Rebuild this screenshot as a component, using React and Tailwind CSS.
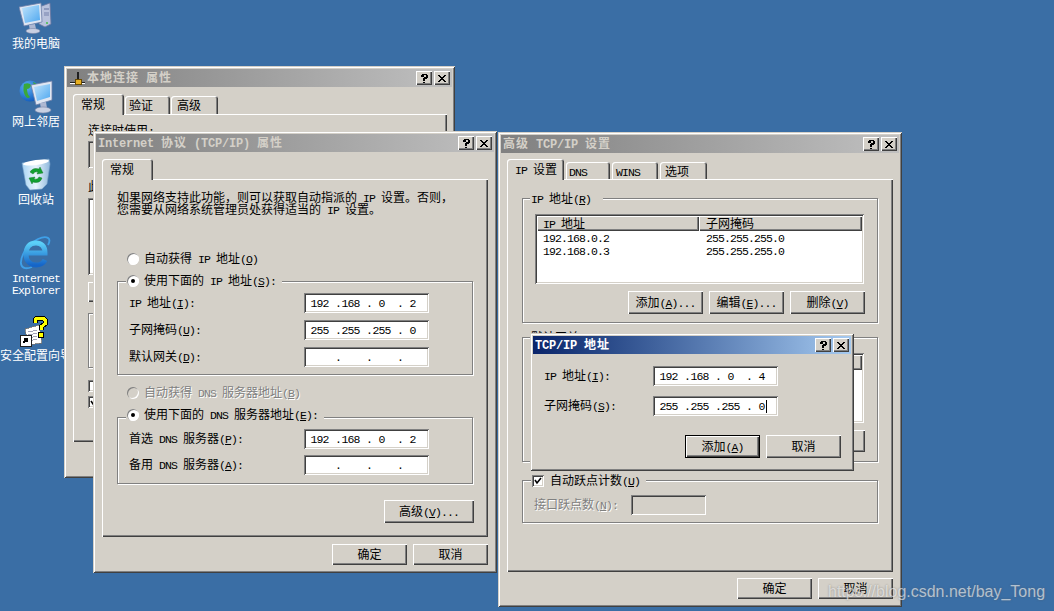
import React from "react";

const RAISED = "shadow-[inset_1px_1px_0_#ffffff,inset_-1px_-1px_0_#404040,inset_-2px_-2px_0_#808080]";
const SUNKEN = "shadow-[inset_1px_1px_0_#808080,inset_-1px_-1px_0_#ffffff,inset_2px_2px_0_#404040,inset_-2px_-2px_0_#d4d0c8]";

function T({ s, title, flat }) {
  const parts = s.split(/([\x00-\x7f]+)/);
  const cls = title
    ? "leading-[0] font-['Liberation_Mono',monospace] text-[12px] tracking-[-0.2px]"
    : "leading-[0] font-['Liberation_Mono',monospace] text-[11.5px] tracking-[-0.9px]";
  return (
    <span className={`whitespace-pre ${title ? "tracking-[1px]" : ""} ${flat ? "" : "inline-block -translate-y-px"}`}>
      {parts.map((p, i) => {
        if (!p) return null;
        if (!/^[\x00-\x7f]+$/.test(p)) return <span key={i}>{p}</span>;
        const m = p.split("&");
        return (
          <span key={i} className={cls}>
            {m.map((q, j) =>
              j === 0 ? (
                q
              ) : (
                <React.Fragment key={j}>
                  <span className="underline">{q[0]}</span>
                  {q.slice(1)}
                </React.Fragment>
              )
            )}
          </span>
        );
      })}
    </span>
  );
}

function TitleBtn({ x }) {
  return (
    <div className={`w-[16px] h-[14px] bg-[#d4d0c8] ${RAISED} flex items-center justify-center text-black`}>
      {x ? (
        <svg width="8" height="7" viewBox="0 0 8 7" shapeRendering="crispEdges">
          <path d="M0 0h2v1h-2zM1 1h2v1h-2zM2 2h1v1h-1zM3 2h2v3h-2zM5 2h1v1h-1zM5 1h2v1h-2zM6 0h2v1h-2zM2 4h1v1h-1zM5 4h1v1h-1zM1 5h2v1h-2zM5 5h2v1h-2zM0 6h2v1h-2zM6 6h2v1h-2z" fill="#000" />
        </svg>
      ) : (
        <svg width="8" height="9" viewBox="0 0 8 9" shapeRendering="crispEdges">
          <path d="M1 0h6v1h1v3h-1v1h-2v2h-2v-3h1v-1h2v-2h-2v2h-3v-2h1zM3 7.500h2v1.500h-2z" fill="#000" />
        </svg>
      )}
    </div>
  );
}

function PlugIcon() {
  return (
    <svg width="15" height="14" viewBox="0 0 15 14" className="absolute left-[3px] top-[3px]" shapeRendering="crispEdges">
      <rect x="7" y="0" width="2" height="8" fill="#202020" />
      <rect x="0" y="10" width="15" height="1" fill="#202020" />
      <rect x="0" y="11" width="15" height="1" fill="#ffffff" />
      <rect x="5" y="7" width="6" height="5" fill="#e8b020" stroke="#6a4a00" />
    </svg>
  );
}

function Window({ className, title, active, plug, children }) {
  return (
    <div className={`absolute ${className} bg-[#d4d0c8] p-[3px] flex flex-col shadow-[inset_1px_1px_0_#d4d0c8,inset_-1px_-1px_0_#404040,inset_2px_2px_0_#ffffff,inset_-2px_-2px_0_#808080]`}>
      <div
        className={`relative shrink-0 h-[18px] flex items-center justify-between pr-[2px] font-bold ${plug ? "pl-[20px]" : "pl-[2px]"} ${
          active
            ? "bg-gradient-to-r from-[#0a246a] to-[#a6caf0] text-white"
            : "bg-gradient-to-r from-[#808080] to-[#c0c0c0] text-[#d4d0c8]"
        }`}
      >
        {plug && <PlugIcon />}
        <T s={title} title />
        <div className="flex gap-[2px]">
          <TitleBtn />
          <TitleBtn x />
        </div>
      </div>
      {children}
    </div>
  );
}

function Tab({ label, active, className }) {
  return (
    <div
      className={`flex items-center rounded-t-[3px] bg-[#d4d0c8] shadow-[inset_1px_1px_0_#ffffff,inset_-1px_0_0_#404040,inset_-2px_0_0_#808080] ${
        active ? "relative z-10 h-[21px] mb-[-1px]" : "pt-[2px]"
      } ${className}`}
    >
      <T s={label} />
    </div>
  );
}

function Panel({ className, children }) {
  return <div className={`bg-[#d4d0c8] ${RAISED} ${className}`}>{children}</div>;
}

function Btn({ label, className = "w-[75px] h-[21px]", def }) {
  return (
    <div
      className={`flex items-center justify-center bg-[#d4d0c8] ${
        def
          ? "shadow-[inset_0_0_0_1px_#000000,inset_2px_2px_0_#ffffff,inset_-2px_-2px_0_#404040,inset_-3px_-3px_0_#808080]"
          : RAISED
      } ${className}`}
    >
      <T s={label} />
    </div>
  );
}

function Group({ className, children }) {
  return (
    <div className={`relative border border-[#808080] shadow-[1px_1px_0_#ffffff,inset_1px_1px_0_#ffffff] ${className}`}>
      {children}
    </div>
  );
}

function Legend({ className, children }) {
  return (
    <div className={`absolute flex items-center h-[13px] bg-[#d4d0c8] ${className}`}>{children}</div>
  );
}

function Radio({ on, off }) {
  return (
    <div
      className={`relative shrink-0 w-[12px] h-[12px] rounded-full ${
        off ? "bg-[#d4d0c8]" : "bg-white"
      } shadow-[inset_1px_1px_0_#808080,inset_-1px_-1px_0_#ffffff] flex items-center justify-center`}
    >
      {on && <div className="w-[4px] h-[4px] rounded-full bg-black" />}
    </div>
  );
}

function RadioRow({ label, on, off }) {
  return (
    <div className="flex items-center gap-[5px] h-[13px]">
      <Radio on={on} off={off} />
      <span className={off ? "text-[#808080] [text-shadow:1px_1px_0_#ffffff]" : ""}>
        <T s={label} />
      </span>
    </div>
  );
}

function IpField({ vals, caret, className = "w-[125px] h-[20px]" }) {
  const v = vals || ["", "", "", ""];
  return (
    <div className={`relative shrink-0 bg-white ${SUNKEN} ${className} flex items-center pl-[3px]`}>
      {v.map((n, i) => (
        <div key={i} className="flex items-center">
          <div className="w-[25px] h-[12px] text-center">
            <T s={n} />
          </div>
          <div className="w-[6px] h-[12px] text-center ml-[3px] mr-[-3px]">{i < 3 && <T s="." />}</div>
        </div>
      ))}
      {caret && <div className="absolute left-[113px] top-[4px] w-[1px] h-[13px] bg-black" />}
    </div>
  );
}

function FormRow({ label, vals, labelW = "w-[175px]" }) {
  return (
    <div className="flex items-center h-[20px]">
      <div className={`${labelW} shrink-0`}>
        <T s={label} />
      </div>
      <IpField vals={vals} />
    </div>
  );
}

function ListView({ rows }) {
  return (
    <div className={`w-[329px] h-[70px] bg-white p-[2px] overflow-hidden ${SUNKEN}`}>
      <div className="flex h-[15px]">
        <div className={`w-[162px] h-[15px] bg-[#d4d0c8] pl-[6px] flex items-center ${RAISED}`}>
          <T s="IP 地址" />
        </div>
        <div className={`w-[163px] h-[15px] bg-[#d4d0c8] pl-[7px] flex items-center ${RAISED}`}>
          <T s="子网掩码" />
        </div>
      </div>
      <div>
        {rows.map((r) => (
          <div key={r[0]} className="flex h-[13px] items-center">
            <div className="w-[162px] pl-[6px]">
              <T s={r[0]} />
            </div>
            <div className="pl-[7px]">
              <T s={r[1]} />
            </div>
          </div>
        ))}
      </div>
    </div>
  );
}

/* ---------- desktop icons ---------- */
function ComputerIcon() {
  return (
    <svg width="34" height="32" viewBox="0 0 34 32">
      <defs>
        <linearGradient id="scr" x1="0" y1="0" x2="1" y2="1">
          <stop offset="0" stopColor="#bfe3fb" />
          <stop offset="1" stopColor="#4fa8f0" />
        </linearGradient>
      </defs>
      <polygon points="20,5 31,1 32,22 26,25 20,22" fill="#b9c2dc" stroke="#6a76a0" strokeWidth="0.8" />
      <rect x="25" y="6" width="5" height="2" fill="#8e99bd" />
      <rect x="25" y="10" width="5" height="4" fill="#97a2c4" />
      <circle cx="28" cy="21" r="0.9" fill="#38c038" />
      <polygon points="0,5 22,1 23,20 5,24" fill="#dfe6f2" stroke="#6d7fa8" strokeWidth="0.8" />
      <polygon points="3,6 20,3 21,18 6,21" fill="url(#scr)" />
      <polygon points="10,23 16,22 17,27 11,29" fill="#aeb8d2" />
      <ellipse cx="14" cy="29" rx="7" ry="2.5" fill="#c9d0e2" stroke="#7b86a8" strokeWidth="0.6" />
    </svg>
  );
}
function NetIcon() {
  return (
    <svg width="34" height="34" viewBox="0 0 34 34">
      <defs>
        <radialGradient id="gl" cx="0.35" cy="0.3" r="0.8">
          <stop offset="0" stopColor="#5cb0f5" />
          <stop offset="1" stopColor="#0c55b8" />
        </radialGradient>
        <linearGradient id="scr2" x1="0" y1="0" x2="1" y2="1">
          <stop offset="0" stopColor="#bfe3fb" />
          <stop offset="1" stopColor="#4fa8f0" />
        </linearGradient>
      </defs>
      <circle cx="11" cy="11" r="10.500" fill="url(#gl)" />
      <path d="M5 4q5-2 7 1q-1 4-4 4q0 5 3 8q-2 2-4 0q-4-6-2-13z" fill="#3aa83a" />
      <path d="M14 2q4 1 5 4q-3 1-4-1z" fill="#3aa83a" />
      <polygon points="12,5 33,1 33,20 17,25" fill="#dfe6f2" stroke="#6d7fa8" strokeWidth="0.8" />
      <polygon points="15,7 31,4 31,17 18,21" fill="url(#scr2)" />
      <polygon points="21,23 27,22 28,28 22,29" fill="#aeb8d2" />
      <ellipse cx="24" cy="30" rx="8" ry="3" fill="#c9d0e2" stroke="#7b86a8" strokeWidth="0.6" />
    </svg>
  );
}
function BinIcon() {
  return (
    <svg width="30" height="34" viewBox="0 0 30 34">
      <defs>
        <linearGradient id="bin" x1="0" y1="0" x2="1" y2="0">
          <stop offset="0" stopColor="#a8d4f4" />
          <stop offset="0.5" stopColor="#e8f4fc" />
          <stop offset="1" stopColor="#8fb8dc" />
        </linearGradient>
      </defs>
      <polygon points="1,5 28,1 29,6 26,26 21,31 9,32 5,27" fill="url(#bin)" stroke="#7ba3c8" strokeWidth="0.6" />
      <ellipse cx="15" cy="4.500" rx="13" ry="2.500" fill="#ffffff" transform="rotate(-8 15 4.500)" />
      <path d="M9 14q3-5 9-3l1-2 3 6-6 1 1-2q-3-1-5 2z" fill="#12a030" stroke="#0a6a1c" strokeWidth="0.4" />
      <path d="M21 20q-2 6-9 4l-1 2-3-6 6-1-1 2q4 1 5-2z" fill="#12a030" stroke="#0a6a1c" strokeWidth="0.4" />
    </svg>
  );
}
function IeIcon() {
  return (
    <svg width="32" height="34" viewBox="0 0 32 34">
      <defs>
        <linearGradient id="ie" x1="0" y1="0" x2="0" y2="1">
          <stop offset="0" stopColor="#5cd0f8" />
          <stop offset="1" stopColor="#1565c8" />
        </linearGradient>
      </defs>
      <path d="M28 9C32 2 27-1 18 3C8 8 0 20 1 28C2 33 7 33 12 31" fill="none" stroke="#3fa0e8" strokeWidth="1.800" />
      <path d="M6 17H25C25 10 21 7 16 7C9 7 6 12 6 18C6 25 10 29 16 29C20 29 23 28 25 24" fill="none" stroke="url(#ie)" strokeWidth="5" />
    </svg>
  );
}
function WizardIcon() {
  return (
    <svg width="42" height="34" viewBox="0 0 42 34" shapeRendering="crispEdges">
      <polygon points="10,14 24,10 27,28 13,30" fill="#ffffff" stroke="#707070" strokeWidth="0.8" />
      <path d="M13 17l9-2M13 20l9-2M13 23l9-2M13 26l9-2" stroke="#8a8aa8" strokeWidth="0.8" />
      <rect x="5.500" y="20.500" width="11" height="11" fill="#ffffff" stroke="#202020" />
      <path d="M8 28l4-4M9 24h3v3" stroke="#000" strokeWidth="1.500" fill="none" />
      <path d="M20 8v-3l2-2h6l2 2v4l-4 3v3" fill="none" stroke="#000" strokeWidth="5" />
      <rect x="23" y="17" width="6" height="6" fill="#000" />
      <path d="M20 8v-3l2-2h6l2 2v4l-4 3v3" fill="none" stroke="#ffff00" strokeWidth="3" />
      <rect x="24" y="18" width="4" height="4" fill="#ffff00" />
    </svg>
  );
}

function DesktopIcon({ icon, label, pad = "pt-[2px]" }) {
  return (
    <div className="h-[78px] w-[72px] flex flex-col items-center">
      <div className={`h-[37px] ${pad} flex justify-center overflow-visible`}>{icon}</div>
      <div className="text-white text-center whitespace-pre">{label}</div>
    </div>
  );
}

export default function App() {
  return (
    <div className="relative w-[1054px] h-[611px] overflow-hidden bg-[#3a6ea5] text-black text-[12px] leading-[12px] font-['Noto_Sans_CJK_SC','Liberation_Sans',sans-serif]">
      {/* Desktop */}
      <div className="flex flex-col w-[72px]">
        <DesktopIcon icon={<ComputerIcon />} label={<T flat s="我的电脑" />} />
        <DesktopIcon icon={<NetIcon />} label={<T flat s="网上邻居" />} />
        <DesktopIcon icon={<BinIcon />} label={<T flat s="回收站" />} />
        <DesktopIcon
          icon={<IeIcon />}
          label={
            <>
              <T flat s="Internet" />
              <br />
              <T flat s="Explorer" />
            </>
          }
        />
        <DesktopIcon icon={<WizardIcon />} pad="pt-[3px]" label={<T flat s="安全配置向导" />} />
      </div>

      {/* Window 1 */}
      <Window className="left-[64px] top-[66px] w-[391px] h-[412px]" title="本地连接 属性" plug>
        <div className="flex items-end ml-[6px] mt-[7px] h-[20px] gap-[1px]">
          <Tab active label="常规" className="w-[51px] pl-[8px]" />
          <Tab label="验证" className="w-[45px] h-[18px] pl-[4px]" />
          <Tab label="高级" className="w-[47px] h-[18px] pl-[6px]" />
        </div>
        <Panel className="ml-[6px] w-[374px] h-[328px] pl-[15px] pt-[10px]">
          <T flat s="连接时使用:" />
          <div className={`mt-[5px] w-[344px] h-[27px] bg-[#d4d0c8] ${SUNKEN}`} />
          <div className="mt-[12px]">
            <T flat s="此连接使用下列项目(&O):" />
          </div>
          <div className={`mt-[6px] w-[344px] h-[77px] bg-white ${SUNKEN}`} />
          <div className={`mt-[7px] w-[90px] h-[20px] bg-[#d4d0c8] ${RAISED}`} />
          <Group className="mt-[11px] w-[344px] h-[55px]" />
          <div className={`mt-[12px] w-[12px] h-[12px] bg-white ${SUNKEN}`} />
          <div className={`mt-[4px] w-[12px] h-[12px] bg-white ${SUNKEN}`}>
            <svg width="12" height="12" viewBox="0 0 12 12">
              <path d="M3 5l2 3 4-5" fill="none" stroke="#000" strokeWidth="1.600" />
            </svg>
          </div>
        </Panel>
      </Window>

      {/* Window 2 */}
      <Window className="left-[93px] top-[131px] w-[404px] h-[442px]" title="Internet 协议 (TCP/IP) 属性">
        <div className="flex items-end ml-[6px] mt-[7px] h-[20px]">
          <Tab active label="常规" className="w-[51px] pl-[8px]" />
        </div>
        <Panel className="ml-[6px] w-[386px] h-[358px] pl-[15px] pt-[12px]">
          <div>
            <T flat s="如果网络支持此功能，则可以获取自动指派的 IP 设置。否则，" />
            <br />
            <T flat s="您需要从网络系统管理员处获得适当的 IP 设置。" />
          </div>
          <div className="mt-[37px] ml-[10px]">
            <RadioRow label="自动获得 IP 地址(&O)" />
          </div>
          <Group className="mt-[16px] w-[356px] h-[94px] pl-[11px] pt-[11px] flex flex-col gap-[7px]">
            <Legend className="left-[8px] top-[-8px] pl-[1px]">
              <RadioRow on label="使用下面的 IP 地址(&S): " />
            </Legend>
            <FormRow label="IP 地址(&I):" vals={["192", "168", "0", "2"]} />
            <FormRow label="子网掩码(&U):" vals={["255", "255", "255", "0"]} />
            <FormRow label="默认网关(&D):" />
          </Group>
          <div className="mt-[11px] ml-[10px]">
            <RadioRow off label="自动获得 DNS 服务器地址(&B)" />
          </div>
          <Group className="mt-[18px] w-[356px] h-[67px] pl-[11px] pt-[11px] flex flex-col gap-[6px]">
            <Legend className="left-[8px] top-[-10px] pl-[1px]">
              <RadioRow on label="使用下面的 DNS 服务器地址(&E): " />
            </Legend>
            <FormRow label="首选 DNS 服务器(&P):" vals={["192", "168", "0", "2"]} />
            <FormRow label="备用 DNS 服务器(&A):" />
          </Group>
          <div className="w-[357px] mt-[16px] flex justify-end">
            <Btn label="高级(&V)..." className="w-[90px] h-[23px]" />
          </div>
        </Panel>
        <div className="flex justify-end gap-[6px] mt-[7px] mr-[6px]">
          <Btn label="确定" />
          <Btn label="取消" />
        </div>
      </Window>

      {/* Window 3 */}
      <Window className="left-[498px] top-[132px] w-[404px] h-[475px]" title="高级 TCP/IP 设置">
        <div className="flex items-end ml-[6px] mt-[7px] h-[19px] gap-[2px]">
          <Tab active label="IP 设置" className="w-[57px] pl-[8px]" />
          <Tab label="DNS" className="w-[44px] h-[17px] pl-[3px]" />
          <Tab label="WINS" className="w-[46px] h-[17px] pl-[4px]" />
          <Tab label="选项" className="w-[47px] h-[17px] pl-[5px]" />
        </div>
        <Panel className="ml-[6px] w-[386px] h-[393px] pl-[15px] pt-[19px]">
          <Group className="w-[356px] h-[125px] pl-[12px] pt-[15px]">
            <Legend className="left-[7px] top-[-7px] pl-[1px]">
              <T s="IP 地址(&R)  " />
            </Legend>
            <ListView
              rows={[
                ["192.168.0.2", "255.255.255.0"],
                ["192.168.0.3", "255.255.255.0"],
              ]}
            />
            <div className="w-[330px] mt-[7px] flex justify-end gap-[6px]">
              <Btn label="添加(&A)..." className="w-[75px] h-[23px]" />
              <Btn label="编辑(&E)..." className="w-[75px] h-[23px]" />
              <Btn label="删除(&V)" className="w-[75px] h-[23px]" />
            </div>
          </Group>
          <Group className="mt-[14px] w-[356px] h-[125px] pl-[12px] pt-[15px]">
            <Legend className="left-[7px] top-[-7px] pl-[1px]">
              <T s="默认网关(&F): " />
            </Legend>
            <ListView rows={[]} />
            <div className="w-[330px] mt-[7px] flex justify-end gap-[6px]">
              <Btn label="添加(&D)..." className="w-[75px] h-[22px]" />
              <Btn label="编辑(&T)..." className="w-[75px] h-[22px]" />
              <Btn label="删除(&M)" className="w-[75px] h-[22px]" />
            </div>
          </Group>
          <Group className="mt-[18px] w-[356px] h-[43px] pl-[11px] pt-[14px]">
            <Legend className="left-[8px] top-[-7px] pl-[1px] gap-[6px]">
              <div className={`w-[12px] h-[12px] bg-white ${SUNKEN}`}>
                <svg width="12" height="12" viewBox="0 0 12 12">
                  <path d="M3 5l2 3 4-5" fill="none" stroke="#000" strokeWidth="1.600" />
                </svg>
              </div>
              <T s="自动跃点计数(&U) " />
            </Legend>
            <div className="flex items-center h-[20px]">
              <span className="w-[97px] shrink-0 text-[#808080] [text-shadow:1px_1px_0_#ffffff]">
                <T s="接口跃点数(&N):" />
              </span>
              <div className={`w-[75px] h-[20px] bg-[#d4d0c8] ${SUNKEN}`} />
            </div>
          </Group>
        </Panel>
        <div className="flex justify-end gap-[6px] mt-[6px] mr-[6px]">
          <Btn label="确定" />
          <Btn label="取消" />
        </div>
      </Window>

      {/* TCP/IP dialog */}
      <Window className="left-[530px] top-[333px] w-[324px] h-[138px]" title="TCP/IP 地址" active>
        <div className="mt-[12px] pl-[11px] flex flex-col gap-[10px]">
          <FormRow label="IP 地址(&I):" vals={["192", "168", "0", "4"]} labelW="w-[109px]" />
          <div className="flex items-center h-[20px]">
            <div className="w-[109px] shrink-0">
              <T s="子网掩码(&S):" />
            </div>
            <IpField vals={["255", "255", "255", "0"]} caret />
          </div>
        </div>
        <div className="flex justify-end gap-[6px] mt-[19px] mr-[10px]">
          <Btn def label="添加(&A)" className="w-[75px] h-[23px]" />
          <Btn label="取消" className="w-[75px] h-[23px]" />
        </div>
      </Window>

      {/* Watermark */}
      <div className="absolute left-[828px] top-[583px] text-[16px] leading-[18px] text-white/60 [text-shadow:0_0_2px_rgba(90,90,90,0.6)] font-['Liberation_Sans',sans-serif]">
        https://blog.csdn.net/bay_Tong
      </div>
    </div>
  );
}
